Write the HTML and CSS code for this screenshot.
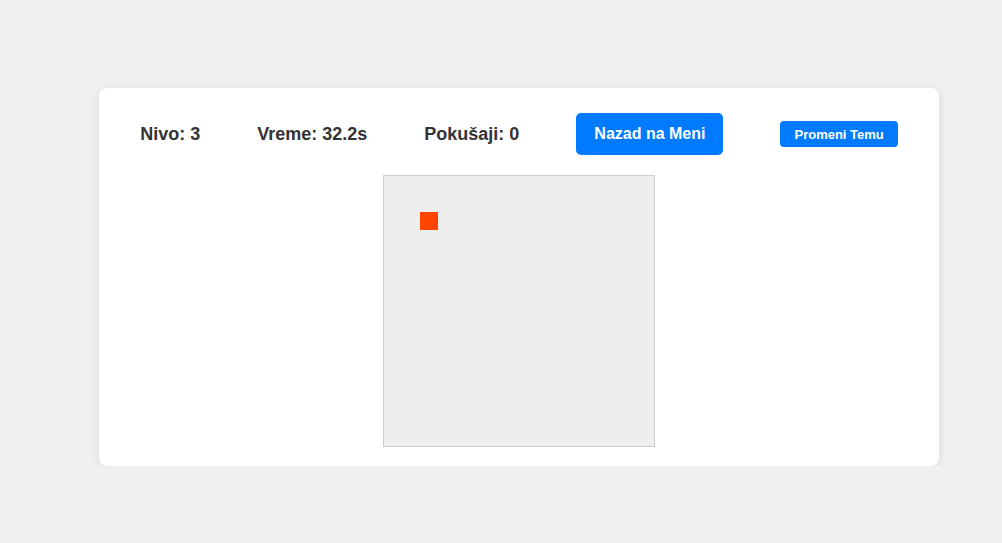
FILE: index.html
```html
<!DOCTYPE html>
<html lang="sr">
<head>
<meta charset="utf-8">
<link rel="stylesheet" href="styles.css">
</head>
<body>
<div class="card">
  <div class="header">
    <div class="stat">Nivo: 3</div>
    <div class="stat">Vreme: 32.2s</div>
    <div class="stat">Pokušaji: 0</div>
    <button class="btn btn-main">Nazad na Meni</button>
    <button class="btn btn-small">Promeni Temu</button>
  </div>
  <div class="board">
    <div class="piece"></div>
  </div>
</div>
</body>
</html>
```
FILE: styles.css
```css
html, body {
  margin: 0;
  padding: 0;
}
body {
  background: #f0f0f0;
  font-family: "Liberation Sans", Arial, sans-serif;
  color: #333;
  padding: 88px 0 0 99px;
}
.card {
  width: 840px;
  box-sizing: border-box;
  background: #fff;
  border-radius: 8px;
  box-shadow: 0 2px 10px rgba(0, 0, 0, 0.1);
  padding: 20px 0 19px;
  display: flex;
  flex-direction: column;
  align-items: center;
}
.header {
  height: 52px;
  flex-shrink: 0;
  display: flex;
  align-items: center;
  justify-content: center;
  gap: 57px;
  margin-bottom: 15px;
}
.stat {
  font-size: 18px;
  font-weight: bold;
  color: #333;
}
.btn {
  background: #007bff;
  color: #fff;
  border: none;
  font-family: "Liberation Sans", Arial, sans-serif;
  font-weight: bold;
  cursor: pointer;
}
.btn-main {
  font-size: 16px;
  height: 42px;
  padding: 0 18px;
  border-radius: 5px;
}
.btn-small {
  font-size: 13px;
  height: 26px;
  padding: 0 14px;
  border-radius: 4px;
}
.board {
  flex-shrink: 0;
  width: 270px;
  height: 270px;
  background: #eee;
  border: 1px solid #ccc;
  position: relative;
}
.piece {
  position: absolute;
  left: 36px;
  top: 36px;
  width: 18px;
  height: 18px;
  background: #ff4500;
}
```
